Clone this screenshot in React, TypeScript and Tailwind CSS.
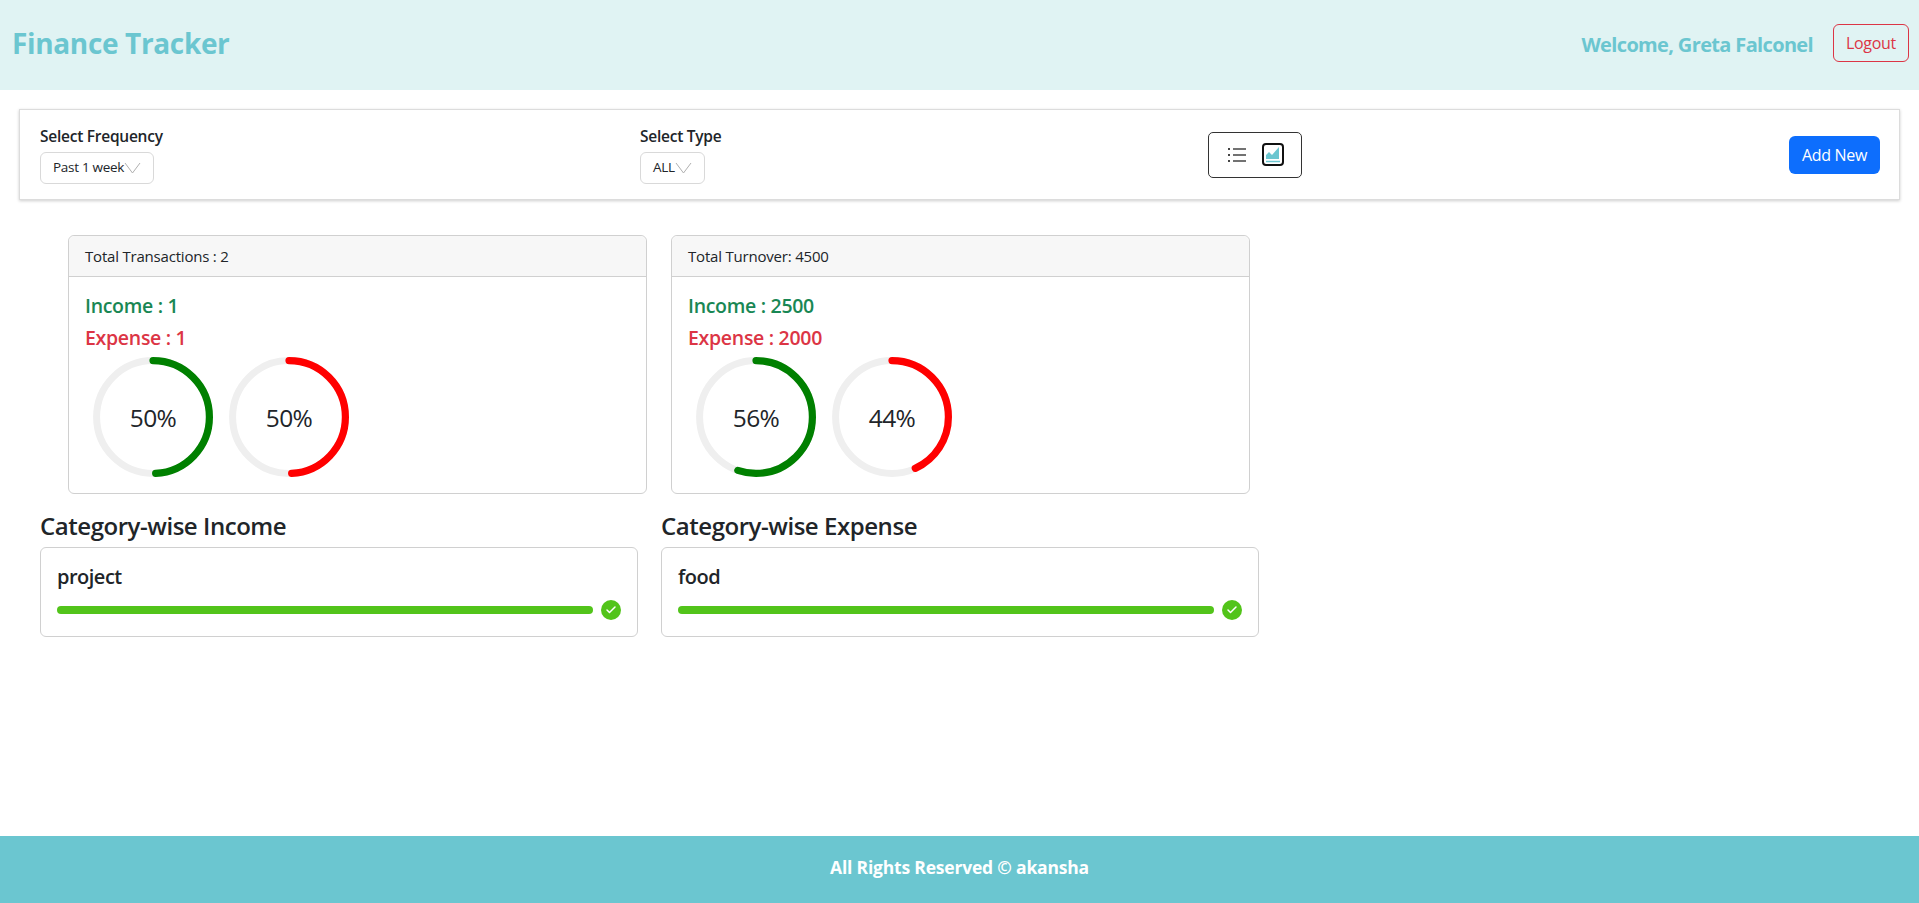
import { Check } from 'lucide-react'

const font = "font-['Open_Sans','Noto_Sans',sans-serif]"

function Ring({ percent, color }: { percent: number; color: string }) {
  const radius = 56.4
  const length = 2 * Math.PI * radius
  return (
    <div className="relative h-[120px] w-[120px]">
      <svg viewBox="0 0 120 120" className="h-[120px] w-[120px] -rotate-90">
        <circle cx="60" cy="60" r={radius} fill="none" stroke="#efefef" strokeWidth="7" />
        <circle
          cx="60"
          cy="60"
          r={radius}
          fill="none"
          stroke={color}
          strokeWidth="7.2"
          strokeLinecap="round"
          strokeDasharray={`${(length * percent) / 100 - 3} ${length}`}
        />
      </svg>
      <span className="absolute inset-0 flex items-center justify-center pt-[2px] text-[24.5px] tracking-[-0.6px] text-[#212529]">
        {percent}%
      </span>
    </div>
  )
}

function SummaryCard(props: {
  title: string
  income: string
  expense: string
  incomePercent: number
  expensePercent: number
}) {
  return (
    <div className="h-[259px] w-[578.5px] rounded-md border border-[#d0d0d0] bg-white">
      <div className="flex h-[41px] items-center rounded-t-md border-b border-[#d0d0d0] bg-[#f7f7f7] px-4 text-[15px] tracking-[-0.2px] text-[#212529]">
        {props.title}
      </div>
      <div className="px-4 pt-[18px]">
        <h5 className="text-[19.5px] leading-[22px] font-semibold tracking-[-0.3px] text-[#198754]">
          Income : {props.income}
        </h5>
        <h5 className="mt-[10px] text-[19.5px] leading-[22px] font-semibold tracking-[-0.3px] text-[#dc3545]">
          Expense : {props.expense}
        </h5>
        <div className="mt-2 ml-2 flex gap-4">
          <Ring percent={props.incomePercent} color="#008000" />
          <Ring percent={props.expensePercent} color="#ff0000" />
        </div>
      </div>
    </div>
  )
}

function CategoryCard({ heading, name }: { heading: string; name: string }) {
  return (
    <div className="w-[597.5px]">
      <h4 className="text-[24px] leading-[28px] font-semibold tracking-[-0.45px] text-[#212529]">{heading}</h4>
      <div className="mt-[7px] h-[90px] rounded-md border border-[#d0d0d0] bg-white px-4 pt-4">
        <div className="text-[20px] leading-[26px] font-semibold tracking-[-0.5px] text-[#212529]">{name}</div>
        <div className="mt-[10px] flex items-center gap-2">
          <div className="h-2 flex-1 rounded-full bg-[#52c41a]" />
          <span className="flex h-5 w-5 items-center justify-center rounded-full bg-[#52c41a]">
            <Check size={12} strokeWidth={3} className="text-white" />
          </span>
        </div>
      </div>
    </div>
  )
}

function FilterSelect({ label, value }: { label: string; value: string }) {
  return (
    <div>
      <div className="text-[15.5px] leading-[20px] font-semibold tracking-[-0.25px] text-[#212529]">{label}</div>
      <div className="mt-[6px] inline-flex h-8 items-center rounded-md border border-[#d9d9d9] bg-white px-3 text-[13.5px] tracking-[-0.3px] text-[#212529]">
        {value}
        <svg width="17" height="12" viewBox="0 0 17 12" fill="none" stroke="#b0b0b0" strokeWidth="1">
          <path d="M1 1l7.5 10L16 1" />
        </svg>
      </div>
    </div>
  )
}

export default function App() {
  return (
    <div className={`flex min-h-[903px] flex-col bg-white ${font}`}>
      <header className="flex h-[90px] items-center justify-between bg-[#e0f3f3] pl-3 pr-[10px]">
        <div className="pb-1 text-[28px] font-bold tracking-[-0.35px] text-[#6bc6d0]">Finance Tracker</div>
        <div className="flex items-center gap-5">
          <span className="text-[20px] font-bold tracking-[-0.65px] text-[#6bc6d0]">Welcome, Greta Falconel</span>
          <button className="mb-1 h-[38px] w-[76px] rounded-md border border-[#dc3545] text-[16px] tracking-[-0.3px] text-[#dc3545]">
            Logout
          </button>
        </div>
      </header>

      <main className="flex-1">
        <div className="mx-[19px] mt-[19px] flex h-[91px] items-center border border-[#dcdcdc] bg-white pl-5 pr-[19px] shadow-[0_1px_3px_rgba(0,0,0,0.2)]">
          <div className="w-[600px]">
            <FilterSelect label="Select Frequency" value="Past 1 week" />
          </div>
          <div className="w-[568px]">
            <FilterSelect label="Select Type" value="ALL" />
          </div>
          <div className="flex h-[46px] w-[94px] items-center justify-center gap-[15px] rounded-[5px] border border-[#333333]">
            <svg width="20" height="18" viewBox="0 0 20 18" fill="none" stroke="#444444" strokeWidth="1.6">
              <path d="M6 3h13M6 9h13M6 15h13" />
              <path d="M1 3h2M1 9h2M1 15h2" strokeWidth="2" />
            </svg>
            <svg width="22" height="23" viewBox="0 0 22 23">
              <rect x="1" y="1" width="20" height="21" rx="3" fill="#fff" stroke="#111111" strokeWidth="2" />
              <path d="M4 16v-4l3-3 3 3 7-8v12z" fill="#6bc6d0" />
              <path d="M4 18.5h14" stroke="#6bc6d0" strokeWidth="1.5" />
            </svg>
          </div>
          <button className="ml-auto h-[38px] w-[91px] rounded-md bg-[#0d6efd] text-[16px] tracking-[-0.3px] text-white">
            Add New
          </button>
        </div>

        <div className="mt-[35px] ml-[68px] flex gap-[24.5px]">
          <SummaryCard title="Total Transactions : 2" income="1" expense="1" incomePercent={50} expensePercent={50} />
          <SummaryCard title="Total Turnover: 4500" income="2500" expense="2000" incomePercent={56} expensePercent={44} />
        </div>

        <div className="mt-[18px] ml-10 flex gap-[23.5px]">
          <CategoryCard heading="Category-wise Income" name="project" />
          <CategoryCard heading="Category-wise Expense" name="food" />
        </div>
      </main>

      <footer className="flex h-[67px] items-center justify-center bg-[#6bc6d0] pb-1 text-[17.5px] font-bold tracking-[-0.2px] text-white">
        All Rights Reserved © akansha
      </footer>
    </div>
  )
}
